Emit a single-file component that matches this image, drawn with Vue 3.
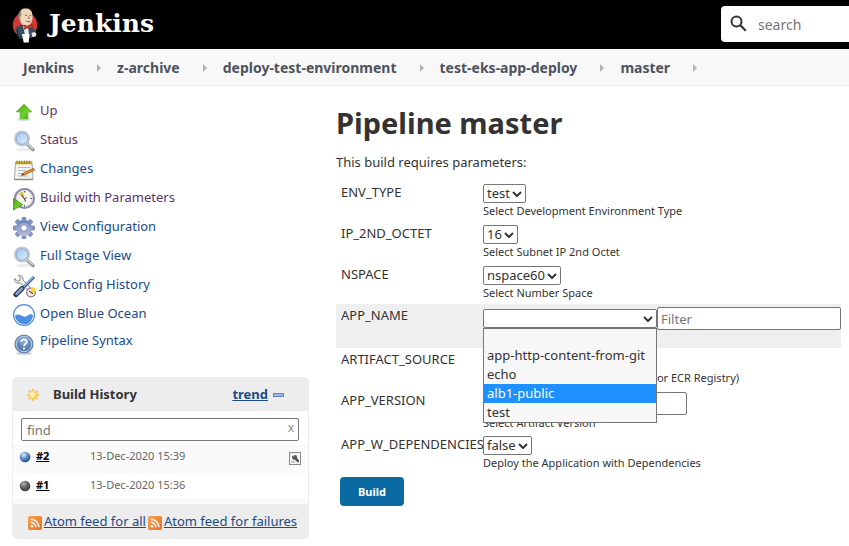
<script setup>
import { ref } from 'vue'

const crumbs = ['Jenkins', 'z-archive', 'deploy-test-environment', 'test-eks-app-deploy', 'master']

const tasks = [
  { icon: 'up', label: 'Up', visited: true },
  { icon: 'glass', label: 'Status', visited: true },
  { icon: 'notepad', label: 'Changes' },
  { icon: 'clock', label: 'Build with Parameters', visited: true },
  { icon: 'gear', label: 'View Configuration' },
  { icon: 'glass', label: 'Full Stage View' },
  { icon: 'tools', label: 'Job Config History' },
  { icon: 'ocean', label: 'Open Blue Ocean' },
  { icon: 'help', label: 'Pipeline Syntax' }
]

const params = [
  { name: 'ENV_TYPE', kind: 'select', value: 'test', help: 'Select Development Environment Type' },
  { name: 'IP_2ND_OCTET', kind: 'select', value: '16', help: 'Select Subnet IP 2nd Octet' },
  { name: 'NSPACE', kind: 'select', value: 'nspace60', help: 'Select Number Space' },
  { name: 'APP_NAME', kind: 'filter' },
  { name: 'ARTIFACT_SOURCE', kind: 'select', value: 'S3', help: 'Select Artifact Source (S3 Buckets or ECR Registry)' },
  { name: 'APP_VERSION', kind: 'text', help: 'Select Artifact Version' },
  { name: 'APP_W_DEPENDENCIES', kind: 'select', value: 'false', help: 'Deploy the Application with Dependencies' }
]

const apps = ['', 'app-http-content-from-git', 'echo', 'alb1-public', 'test']
const active = ref('alb1-public')

const builds = [
  { id: '#2', date: '13-Dec-2020 15:39', ball: 'url(#ballBlue)', tool: true },
  { id: '#1', date: '13-Dec-2020 15:36', ball: 'url(#ballGrey)' }
]
const teeth = [0, 45, 90, 135, 180, 225, 270, 315]
</script>

<template>
  <div class="page">
    <svg class="defs" width="0" height="0" aria-hidden="true">
      <defs>
        <linearGradient id="green" x1="0" y1="0" x2="1" y2="1"><stop offset="0" stop-color="#4fa51c" /><stop offset=".6" stop-color="#6fd02c" /><stop offset="1" stop-color="#3f9a12" /></linearGradient>
        <linearGradient id="lens" x1="0" y1="0" x2="1" y2="1"><stop offset="0" stop-color="#9cc3ee" /><stop offset="1" stop-color="#e2effc" /></linearGradient>
        <linearGradient id="gearFill" x1="0" y1="0" x2="0" y2="1"><stop offset="0" stop-color="#6384b8" /><stop offset="1" stop-color="#c3bddb" /></linearGradient>
        <linearGradient id="rss" x1="0" y1="0" x2="1" y2="1"><stop offset="0" stop-color="#f5a055" /><stop offset="1" stop-color="#e8701c" /></linearGradient>
        <radialGradient id="ballBlue" cx=".38" cy=".3" r=".7"><stop offset="0" stop-color="#e6f0fb" /><stop offset=".45" stop-color="#6c9bd2" /><stop offset="1" stop-color="#1d4a8c" /></radialGradient>
        <radialGradient id="ballGrey" cx=".38" cy=".3" r=".7"><stop offset="0" stop-color="#b5b5b5" /><stop offset=".45" stop-color="#6b6b6b" /><stop offset="1" stop-color="#3a3a3a" /></radialGradient>
        <radialGradient id="sun" cx=".4" cy=".4" r=".6"><stop offset="0" stop-color="#fffbd0" /><stop offset="1" stop-color="#fbd04a" /></radialGradient>
        <radialGradient id="helpFill" cx=".5" cy=".3" r=".7"><stop offset="0" stop-color="#8fb0da" /><stop offset="1" stop-color="#41699f" /></radialGradient>
      </defs>
    </svg>

    <header class="top">
      <a class="brand" href="#">
        <svg class="butler" viewBox="0 0 26 36" aria-hidden="true">
          <ellipse cx="13" cy="18" rx="12.200" ry="12.600" fill="#d33833" />
          <path d="M3.500 21l5-3 9 1 5 3 1.500 5-2 3-4 1-4 1H8l-3-4z" fill="#335061" />
          <path d="M11 19l5 0 1 9h-4z" fill="#e9eef1" />
          <path d="M7.500 7c0-4 3.500-6.200 7.500-5.600 4 .6 5.500 3.600 5.400 7.200.6 4-.4 8.400-4.400 9.900-4 .9-7.500-1.300-8-5.500C6.500 12 6.500 9 7.500 7z" fill="#f0d6b7" />
          <path d="M9 3.500C6 5.500 5.500 9 6.800 13l1.500 1c0-3-.4-4 1-6z" fill="#8d8580" />
          <path d="M8 4c3-4 9-3.500 11.500 0" fill="none" stroke="#5b4a40" stroke-width=".7" />
          <path d="M13 8.500l2-.5M17.500 8.500l1.600.3M14 14c1.600.8 3 .8 4.600 0M16.500 9.500l.8 2.500" fill="none" stroke="#6b4a3a" stroke-width=".9" />
          <path d="M12 18l4 1.500 4-2 .5 4-4.500-.8-3.500 1.800z" fill="#d33833" stroke="#7a1512" stroke-width=".5" />
          <path d="M10 27h7.500l-.8 8.500h-5z" fill="#fff" />
          <path d="M19.500 26l3-1 2 2-1 2.600-3 .4z" fill="#f7e9d8" />
          <path d="M5 22l1 7 4 2" fill="none" stroke="#1b2c36" stroke-width="1" />
        </svg>
        <span class="wordmark">Jenkins</span>
      </a>
      <label class="search">
        <svg viewBox="0 0 18 18" aria-hidden="true"><circle cx="6.500" cy="6.500" r="5" fill="none" stroke="#333" stroke-width="2" /><path d="M10.300 10.300l5.500 5.500" stroke="#333" stroke-width="2.200" /></svg>
        <input type="text" placeholder="search" aria-label="search" />
      </label>
    </header>

    <nav class="crumbs">
      <template v-for="c in crumbs" :key="c">
        <a href="#">{{ c }}</a>
        <svg viewBox="0 0 4 8" aria-hidden="true"><path d="M0 0l4 4-4 4z" fill="#b3b3b3" /></svg>
      </template>
    </nav>

    <div class="body">
      <aside class="side">
        <nav class="tasks">
          <a v-for="t in tasks" :key="t.label" href="#" :class="['task', t.icon, { visited: t.visited }]">
            <svg viewBox="0 0 24 24" aria-hidden="true">
              <g v-if="t.icon === 'up'">
                <ellipse cx="12" cy="19.500" rx="7" ry="1.800" fill="#ddd" />
                <path d="M12 4l8 8h-4v7H8v-7H4z" fill="url(#green)" stroke="#6eb43e" stroke-width=".6" />
              </g>
              <g v-else-if="t.icon === 'glass'">
                <ellipse cx="12" cy="20.500" rx="8" ry="1.800" fill="#ececec" />
                <path d="M15 15l6 5.500" stroke="#9a9a9a" stroke-width="3.600" stroke-linecap="round" />
                <path d="M15.500 14.800l5.500 5" stroke="#d8d8d8" stroke-width="1.200" />
                <circle cx="10" cy="9.500" r="7" fill="url(#lens)" stroke="#c6c8cc" stroke-width="2.200" />
                <circle cx="10" cy="9.500" r="5.800" fill="none" stroke="#7ba4d8" stroke-width=".8" />
              </g>
              <g v-else-if="t.icon === 'notepad'">
                <path d="M3.500 4h16.500l1 17.500H2.500z" fill="#f4f4f0" stroke="#a9a9a2" stroke-width="1" />
                <path d="M2.500 21.500h18.500" stroke="#8d8d86" stroke-width="1.500" />
                <path d="M4 3.500h16v2.800H4z" fill="#c9a32c" />
                <path d="M5 2.500v3M7.500 2.500v3M10 2.500v3M12.500 2.500v3M15 2.500v3M17.500 2.500v3" stroke="#8a6d14" stroke-width=".7" />
                <path d="M6 9.500h12M6 12.500h8M6 15.500h6M6 18h11" stroke="#b8bab8" stroke-width="1" />
                <path d="M9.500 17.200l2-2.400 10-4.600 1.400 1.800-10.200 4.900z" fill="#e8893c" stroke="#8d4a1a" stroke-width=".6" />
                <path d="M9 17.500l2-2.200 1 1.400z" fill="#333" />
              </g>
              <g v-else-if="t.icon === 'clock'">
                <circle cx="12.500" cy="11.500" r="9.500" fill="#f4f3ec" stroke="#8f8aa8" stroke-width="2.200" />
                <circle cx="12.500" cy="11.500" r="8" fill="none" stroke="#cfcde0" stroke-width=".8" />
                <path d="M12.500 11.500L7 7.500a7 7 0 0 1 4-3z" fill="#dcc14a" />
                <path d="M12.500 12l-3-4M12.500 12l2-1.500M12.500 12l1 2.500" stroke="#333" stroke-width="1" />
                <path d="M12.500 4v1.500M12.500 18v1.500M18.500 11.500h1.500" stroke="#555" stroke-width="1" />
                <path d="M1.500 11.500l9 6-9 5.500z" fill="url(#green)" stroke="#3b8f10" stroke-width=".8" />
              </g>
              <g v-else-if="t.icon === 'gear'">
                <rect v-for="a in teeth" :key="a" x="9.600" y="1" width="4.800" height="6" rx="1" fill="#8593bf" :transform="`rotate(${a} 12 12)`" />
                <circle cx="12" cy="12" r="8" fill="url(#gearFill)" />
                <circle cx="12" cy="12" r="5" fill="#a3abcd" />
                <circle cx="12" cy="12" r="3" fill="#fff" stroke="#7484b1" stroke-width=".6" />
              </g>
              <g v-else-if="t.icon === 'tools'">
                <path d="M2.500 4.500l3 2.600 2.500-.8.300-2.600-2-2.200c3-.6 5.300 1.500 4.700 4.500l8 8.500-2.200 2.500-8.400-8.200C5 10 1.800 7.500 2.500 4.500z" fill="#f2f2f2" stroke="#777" stroke-width=".9" />
                <path d="M22 3L12 13" stroke="#274b86" stroke-width="2.600" />
                <path d="M21.500 3.200L12 12.500" stroke="#8eb7e8" stroke-width="1.200" />
                <path d="M10 14.500L4 20.500" stroke="#1c2d55" stroke-width="5" stroke-linecap="round" />
                <path d="M10 14.500L4.500 20" stroke="#89a4cd" stroke-width="2.600" stroke-linecap="round" />
                <circle cx="19" cy="18.500" r="4.300" fill="#f6ecd6" stroke="#9a6f98" stroke-width="1.300" />
                <path d="M19 18.500v-5h4.500v5z" fill="#f4dc24" />
                <path d="M19 18.500l-2-1.500M19 18.500l2 1" stroke="#222" stroke-width="1" />
              </g>
              <g v-else-if="t.icon === 'ocean'">
                <circle cx="12" cy="12" r="10.400" fill="#fff" stroke="#4a90e2" stroke-width="1.200" />
                <path d="M3 12.500c2.500-2 5-1 7.500.6 3 1.700 4.500-.2 6.500-1.300 1.500-.8 3-.5 4 .2a9 9 0 0 1-18 .5z" fill="#4a90e2" />
              </g>
              <g v-else>
                <ellipse cx="12" cy="21.500" rx="8" ry="1.600" fill="#d5d5d5" />
                <circle cx="12" cy="12" r="8.800" fill="url(#helpFill)" stroke="#6685b0" stroke-width="1.600" />
                <circle cx="12" cy="12" r="7.700" fill="none" stroke="#c4d5ec" stroke-width="1" />
                <path d="M9.200 9.800c.2-3.200 5.800-3.200 5.600.1-.1 1.800-2.700 1.900-2.700 4M12.100 15.600v1.800" fill="none" stroke="#fff" stroke-width="1.900" />
              </g>
            </svg>
            <span>{{ t.label }}</span>
          </a>
        </nav>

        <section class="history">
          <div class="history-head">
            <svg class="sun" viewBox="0 0 14 14" aria-hidden="true">
              <rect v-for="a in teeth" :key="a" x="6.200" y=".8" width="1.600" height="3" fill="#f6bd78" :transform="`rotate(${a} 7 7)`" />
              <circle cx="7" cy="7" r="4.300" fill="url(#sun)" stroke="#f5c060" stroke-width=".7" />
            </svg>
            <strong>Build History</strong>
            <a href="#">trend</a>
            <svg class="minus" viewBox="0 0 12 4" aria-hidden="true"><rect x=".5" y=".5" width="10" height="3" fill="#9db9df" stroke="#5f87bd" /></svg>
          </div>
          <div class="find">
            <input type="text" placeholder="find" aria-label="find" />
            <button type="button" aria-label="clear">x</button>
          </div>
          <div v-for="b in builds" :key="b.id" class="build">
            <svg class="ball" viewBox="0 0 12 12" aria-hidden="true"><circle cx="6" cy="6" r="5.300" :fill="b.ball" /></svg>
            <a href="#">{{ b.id }}</a>
            <span>{{ b.date }}</span>
            <svg v-if="b.tool" class="wrench" viewBox="0 0 12 13" aria-hidden="true">
              <rect x=".5" y=".5" width="11" height="12" fill="#f3f3f3" stroke="#8c8c8c" />
              <path d="M3 3.500l1.500 1.200 1-1.700c2-.4 3 1.300 2.400 2.800L10 8.500v1.700H8.300L6 7.700C4 8 2.500 6 3 3.500z" fill="#555" />
              <path d="M2.500 9.800h3" stroke="#888" />
            </svg>
          </div>
          <div class="history-foot">
            <template v-for="f in ['Atom feed for all', 'Atom feed for failures']" :key="f">
              <svg viewBox="0 0 14 14" aria-hidden="true">
                <rect width="14" height="14" rx="2" fill="url(#rss)" />
                <circle cx="4" cy="10.200" r="1.300" fill="#fff" />
                <path d="M2.800 6.300a5 5 0 0 1 5 5M2.800 3.200a8.100 8.100 0 0 1 8.100 8.100" fill="none" stroke="#fff" stroke-width="1.500" />
              </svg>
              <a href="#">{{ f }}</a>
            </template>
          </div>
        </section>
      </aside>

      <main class="main">
        <h1>Pipeline master</h1>
        <p>This build requires parameters:</p>
        <form @submit.prevent>
          <div v-for="p in params" :key="p.name" :class="['param', p.kind]">
            <label :for="p.name">{{ p.name }}</label>
            <div class="field">
              <input v-if="p.kind === 'text'" :id="p.name" class="version" type="text" />
              <div v-else :class="{ combo: p.kind === 'filter' }">
                <div class="picker">
                  <select :id="p.name"><option>{{ p.value }}</option></select>
                  <svg viewBox="0 0 10 6" aria-hidden="true"><path d="M1 1l4 4 4-4" fill="none" stroke="#333" stroke-width="2" /></svg>
                </div>
                <template v-if="p.kind === 'filter'">
                  <input type="text" placeholder="Filter" aria-label="Filter" />
                  <ul class="menu" role="listbox">
                    <li v-for="a in apps" :key="a" role="option" :class="{ active: a === active }" @mouseenter="active = a">{{ a }}</li>
                  </ul>
                </template>
              </div>
              <div v-if="p.help" class="help-text">{{ p.help }}</div>
            </div>
          </div>
          <button class="submit" type="submit">Build</button>
        </form>
      </main>
    </div>
  </div>
</template>

<style>
body { background: #fff; }
</style>

<style scoped>
* { box-sizing: border-box; }
.page { font: 13px/18px "Noto Sans", sans-serif; color: #333; overflow-x: hidden; }
.defs { position: absolute; }
input, select, button { font-family: inherit; font-size: 13px; color: #333; margin: 0; }
a { color: #204a87; }
svg { flex: none; }

.top { display: flex; justify-content: space-between; height: 49px; background: #000; }
.brand { display: flex; align-items: center; gap: 11px; padding-left: 12px; text-decoration: none; color: #fff; }
.butler { width: 26px; height: 36px; }
.wordmark { font: bold 25px/32px "DejaVu Serif", serif; padding-bottom: 2px; }
.search { display: flex; align-items: center; gap: 8px; width: 128px; height: 36px; margin-top: 6px; padding-left: 9px; background: #fff; border-radius: 4px 0 0 4px; }
.search svg { width: 18px; height: 18px; }
.search input { width: 100%; min-width: 0; border: 0; outline: 0; font-size: 14px; background: none; }
input::placeholder { color: #757575; }

.crumbs { display: flex; align-items: center; height: 37px; padding-left: 23px; background: #f8f8f8; border-bottom: 1px solid #ececec; }
.crumbs a { padding-top: 2px; font-size: 14px; font-weight: bold; color: #4d545d; text-decoration: none; }
.crumbs svg { width: 4px; height: 8px; margin: 2px 16px 0 23px; }

.body { display: grid; grid-template-columns: 297px minmax(0, 1fr); gap: 27px; padding: 11px 8px 8px 12px; }
.tasks { display: flex; flex-direction: column; padding-bottom: 19px; }
.task { display: flex; align-items: center; gap: 4px; height: 29px; color: #204a87; text-decoration: none; }
.task svg { width: 24px; height: 24px; }
.task span { padding-bottom: 3px; }
.task.visited { color: #5c3566; }
.task.help span { padding-bottom: 8px; }

.history { background: #ededed; border-radius: 5px; border: 1px solid #ededed; }
.history-head { display: flex; align-items: center; height: 33px; padding: 0 23px 0 13px; }
.history-head strong { flex: 1; margin-left: 13px; }
.history-head a { font-weight: bold; margin-right: 5px; }
.history-head strong, .history-head a { padding-bottom: 2px; }
.sun { width: 14px; height: 14px; }
.minus { width: 12px; height: 4px; }
.find { position: relative; padding: 7px 9px 4px 8px; background: #fff; }
.find input { display: block; width: 100%; height: 23px; padding: 0 5px; }
.find button { position: absolute; right: 14px; top: 8px; border: 0; padding: 0; line-height: 18px; font-size: 12px; background: none; color: #8a8a8a; }
input { border: 1px solid #767676; border-radius: 2px; background: #fff; }
.build { display: flex; align-items: flex-start; height: 29px; padding: 2px 7px 0 6px; background: #fafafa; font-size: 11px; color: #666; }
.build + .build { background: #fff; border-bottom: 5px solid #fafafa; height: 30px; }
.build a { width: 54px; margin-left: 5px; font-weight: bold; color: #000; }
.build span { flex: 1; }
.ball { width: 12px; height: 12px; margin-top: 4px; }
.wrench { width: 12px; height: 13px; margin-top: 5px; }
.history-foot { display: flex; align-items: center; justify-content: center; gap: 2px; height: 34px; padding-left: 4px; }
.history-foot svg { width: 14px; height: 14px; margin-top: 3px; }
.history-foot a { padding-bottom: 1px; }

h1 { margin: 6px 0 0; font-size: 29px; line-height: 40px; }
.main p { margin: 10px 0; }
.param { display: grid; grid-template-columns: 142px minmax(0, 1fr); height: 41px; padding: 3px 0 0 5px; }
.param.filter, .param.text { height: 44px; }
.param.filter { background: #efefef; }
.param label { line-height: 16px; white-space: nowrap; }
.field { display: flex; flex-direction: column; align-items: flex-start; }
.picker { position: relative; display: flex; align-items: center; }
.picker svg { position: absolute; right: 4px; width: 10px; height: 6px; pointer-events: none; }
select { appearance: none; height: 19px; padding: 0 15px 0 3px; line-height: 17px; border: 1px solid #767676; border-radius: 2px; background-color: #fff; }
.version { width: 204px; height: 23px; }
.help-text { font-size: 11px; line-height: 16px; }
.combo { position: relative; display: flex; align-items: center; width: 100%; height: 23px; }
.combo select { width: 174px; }
.combo input { flex: 1; min-width: 0; height: 23px; padding: 0 3px; }
.menu { position: absolute; z-index: 1; top: 21px; left: 0; width: 174px; margin: 0; padding: 0; list-style: none; background: #f7f7f7; border: 1px solid #767676; }
.menu li { height: 19px; padding: 0 3px; white-space: nowrap; }
.menu li:empty { height: 17px; }
.menu li.active { background: #1e90ff; color: #fff; }
.submit { display: block; margin: 3px 0 0 4px; padding: 6px 18px 5px; border: 0; border-radius: 4px; background: #0b6aa2; color: #fff; font-size: 11px; line-height: 18px; font-weight: bold; }
</style>
